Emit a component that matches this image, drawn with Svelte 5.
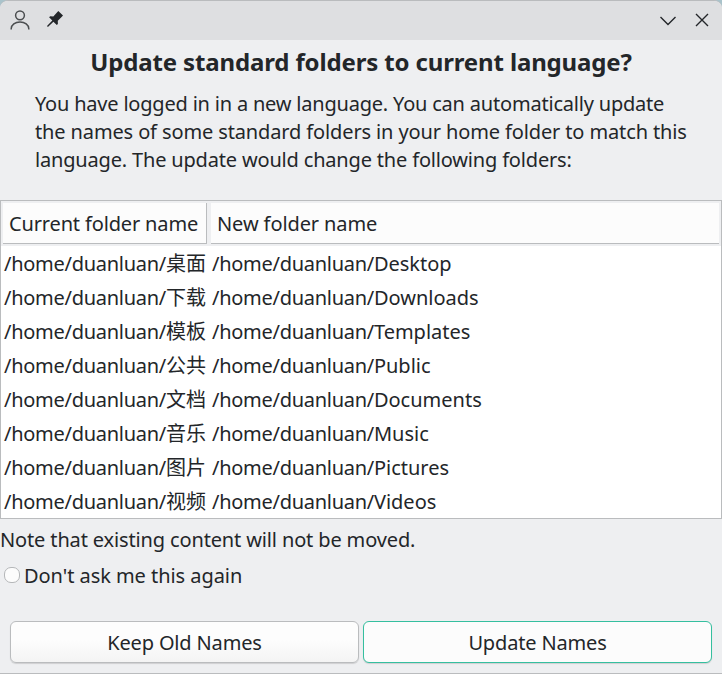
<script>
  const folders = [
    ['桌面', 'Desktop'],
    ['下载', 'Downloads'],
    ['模板', 'Templates'],
    ['公共', 'Public'],
    ['文档', 'Documents'],
    ['音乐', 'Music'],
    ['图片', 'Pictures'],
    ['视频', 'Videos'],
  ];
  const home = '/home/duanluan/';
  let dontAsk = $state(false);
</script>

<div class="window">
  <header class="titlebar">
    <svg class="user" width="20" height="20" viewBox="0 0 20 20" fill="none" stroke="#4b4e50" stroke-width="1.5">
      <circle cx="10" cy="5.3" r="4.4" />
      <path d="M1.200 19.600v-.8c0-4 4-6.800 8.800-6.800s8.800 2.800 8.800 6.800v.8" />
    </svg>
    <svg class="pin" width="16" height="16" viewBox="0 0 16 16" fill="#232629">
      <path d="M11.300 0 16 4.600 14.600 6 10.800 9.800 10.900 13 9.800 14 6.400 10.700.9 16 0 15.100 5.300 9.600 2.100 6.300 3.200 5.200 6.300 5.400Z" />
    </svg>
    <span class="spacer"></span>
    <svg class="shade" width="16" height="10" viewBox="0 0 16 10" fill="none" stroke="#232629" stroke-width="1.4"><path d="M.5 1 8 8.500 15.500 1" /></svg>
    <svg class="close" width="14" height="14" viewBox="0 0 14 14" fill="none" stroke="#232629" stroke-width="1.4"><path d="M1 1 13 13M13 1 1 13" /></svg>
  </header>

  <h1>Update standard folders to current language?</h1>
  <p class="intro">
    <span class="l1">You have logged in in a new language. You can automatically update</span><br />
    <span class="l2">the names of some standard folders in your home folder to match this</span><br />
    <span class="l3">language. The update would change the following folders:</span>
  </p>

  <div class="list">
    <div class="head">
      <div class="th first">Current folder name</div>
      <div class="th second">New folder name</div>
    </div>
    {#each folders as [current, next]}
      <div class="row">
        <span class="cell"><span class="home">{home}</span>{current}</span>
        <span><span class="home">{home}</span>{next}</span>
      </div>
    {/each}
  </div>

  <p class="note">Note that existing content will not be moved.</p>
  <label class="check">
    <input type="checkbox" bind:checked={dontAsk} />
    <span>Don't ask me this again</span>
  </label>

  <div class="actions">
    <button>Keep Old Names</button>
    <button class="default">Update Names</button>
  </div>
</div>

<style>
  :global(body) { background: #a9c3cb; }
  .window {
    box-sizing: border-box;
    width: 722px;
    height: 674px;
    display: flex;
    flex-direction: column;
    overflow: hidden;
    background: #eeeff1;
    border-top: 1px solid #b9bbbd;
    border-bottom: 1px solid #babcbe;
    border-radius: 8px 8px 0 0;
    color: #232629;
    font: 20px/28px "Noto Sans", "Noto Sans CJK SC", sans-serif;
    white-space: nowrap;
  }
  .titlebar {
    box-sizing: border-box;
    height: 39px;
    flex: none;
    display: flex;
    align-items: flex-start;
    padding: 0 13px 0 10px;
    background: #dedfe1;
  }
  .user { margin-top: 9px; }
  .pin { margin: 10px 0 0 17px; }
  .spacer { flex: 1; }
  .shade { margin: 15px 19px 0 0; }
  .close { margin: 12px 0 0; }
  h1 {
    margin: 6px 0 0;
    font-size: 24px;
    line-height: 32px;
    letter-spacing: -0.14px;
    text-align: center;
  }
  p { margin: 0; }
  .intro { margin: 12px 0 0 35px; }
  .l1 { letter-spacing: -0.2px; }
  .l2 { letter-spacing: -0.125px; }
  .l3 { letter-spacing: -0.175px; }
  .list {
    box-sizing: border-box;
    height: 319px;
    flex: none;
    margin-top: 26px;
    border: 1px solid #babcbe;
    background: #fff;
  }
  .head {
    box-sizing: border-box;
    display: flex;
    gap: 4px;
    height: 45px;
    padding: 2px;
    background: #eeeff1;
    margin-bottom: 1px;
  }
  .th {
    box-sizing: border-box;
    height: 41px;
    padding: 7px 6px 0;
    line-height: 28px;
    background: #fcfcfc;
    border-bottom: 1px solid #babcbe;
  }
  .first { width: 204px; border-right: 1px solid #babcbe; letter-spacing: -0.15px; }
  .second { flex: 1; letter-spacing: -0.1px; }
  .row { display: flex; height: 34px; line-height: 34px; padding-left: 3px; }
  .cell { width: 208px; }
  .home { letter-spacing: -0.28px; }
  .note { margin-top: 7px; letter-spacing: -0.14px; }
  .check { display: flex; align-items: center; height: 28px; margin: 8px 0 0 4px; gap: 4px; letter-spacing: -0.05px; }
  input {
    appearance: none;
    box-sizing: border-box;
    width: 16px;
    height: 16px;
    margin: 0 0 2px;
    border: 1px solid #b5b7b9;
    border-radius: 7px;
    background: #fcfcfc;
  }
  input:checked { background: #2fbf9f; }
  .actions { display: flex; gap: 4px; margin: 31px 10px 0; }
  button {
    box-sizing: border-box;
    flex: 1;
    height: 42px;
    padding: 2px 0 0;
    border: 1px solid #babcbe;
    border-radius: 6px;
    background: linear-gradient(#fdfdfd 45%, #f4f4f4);
    box-shadow: 0 1px 1px #0002;
    color: inherit;
    font: inherit;
    letter-spacing: -0.16px;
  }
  .default { border-color: #35bf9f; background: #fcfcfc; }
</style>
